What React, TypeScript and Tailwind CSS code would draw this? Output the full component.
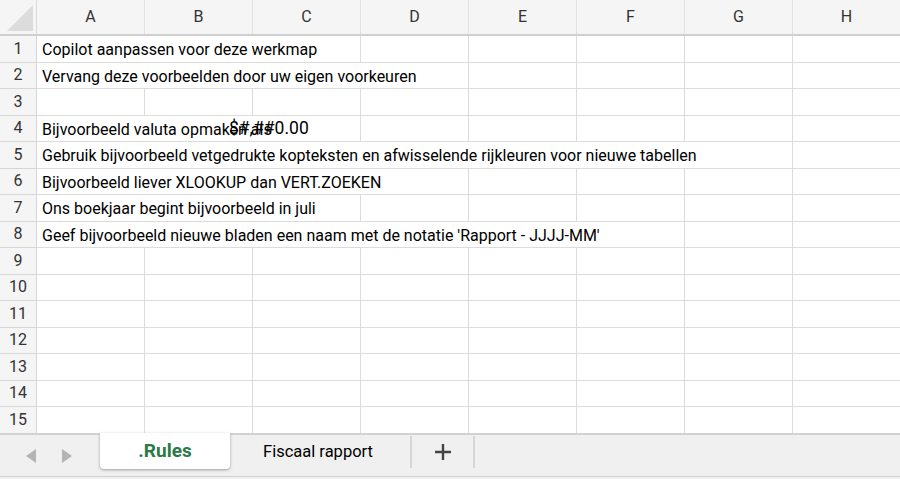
import React from "react";

const columns = ["A", "B", "C", "D", "E", "F", "G", "H"];

// text living in column A, keyed by row number
const cellText: Record<number, string> = {
  1: "Copilot aanpassen voor deze werkmap",
  2: "Vervang deze voorbeelden door uw eigen voorkeuren",
  4: "Bijvoorbeeld valuta opmaken als",
  5: "Gebruik bijvoorbeeld vetgedrukte kopteksten en afwisselende rijkleuren voor nieuwe tabellen",
  6: "Bijvoorbeeld liever XLOOKUP dan VERT.ZOEKEN",
  7: "Ons boekjaar begint bijvoorbeeld in juli",
  8: "Geef bijvoorbeeld nieuwe bladen een naam met de notatie 'Rapport - JJJJ-MM'",
};

const rows = Array.from({ length: 15 }, (_, i) => i + 1);

const gridCols = "grid grid-cols-[37px_repeat(8,108px)]";

const SheetTabs: React.FC = () => (
  <div className="h-[46px] shrink-0 bg-[#f0f0f0] border-t-2 border-[#d2d2d2] flex items-start relative">
    <div className="w-[100px] h-[42px] flex items-center pl-[24px] gap-[22px]">
      <svg width="14" height="16" viewBox="0 0 14 16">
        <path d="M12 1 L2 8 L12 15 Z" fill="#b4b4b4" />
      </svg>
      <svg width="14" height="16" viewBox="0 0 14 16">
        <path d="M2 1 L12 8 L2 15 Z" fill="#b4b4b4" />
      </svg>
    </div>
    <div className="w-[130px] h-[36px] bg-white rounded-b-[4px] shadow-[0_1px_3px_rgba(0,0,0,0.35)] flex items-center justify-center -mt-[2px] text-[19px] font-bold text-[#2a7a45]">
      .Rules
    </div>
    <div className="w-[182px] h-[32px] mt-[1px] border-r-2 border-[#d6d6d6] flex items-center justify-center pr-[4px] text-[16.5px] text-black">
      Fiscaal rapport
    </div>
    <div className="w-[63px] h-[32px] mt-[1px] border-r-2 border-[#d6d6d6] flex items-center justify-center">
      <svg width="18" height="18" viewBox="0 0 18 18">
        <path d="M9 1 V17 M1 9 H17" stroke="#444" strokeWidth="2.4" />
      </svg>
    </div>
    <div className="absolute left-0 right-0 bottom-[2px] h-px bg-[#d0d0d0]" />
  </div>
);

export default function App() {
  return (
    <div
      className="w-[900px] h-[479px] overflow-hidden bg-white flex flex-col"
      style={{ fontFamily: "Roboto, 'Liberation Sans', sans-serif" }}
    >
      {/* column headers */}
      <div className={`${gridCols} h-[36px] shrink-0 bg-[#f5f5f5] border-b-2 border-[#cfcfcf]`}>
        <div className="relative border-r border-[#dadada]">
          <svg className="absolute right-[3px] bottom-[3px]" width="26" height="26" viewBox="0 0 26 26">
            <path d="M26 0 V26 H0 Z" fill="#dcdcdc" />
          </svg>
        </div>
        {columns.map((c) => (
          <div
            key={c}
            className="border-r border-[#e0e0e0] flex items-center justify-center text-[16px] text-[#333]"
          >
            {c}
          </div>
        ))}
      </div>

      {/* rows */}
      <div className="flex-1 flex flex-col overflow-hidden">
        {rows.map((r) => (
          <div key={r} className={`${gridCols} h-[26.5px] shrink-0`}>
            <div className="bg-[#f5f5f5] border-r border-b border-[#d6d6d6] flex items-center justify-center text-[16px] text-[#333]">
              {r}
            </div>
            {columns.map((c, ci) => (
              <div key={c} className="relative border-r border-b border-[#dcdcdc]">
                {ci === 0 && cellText[r] && (
                  <span
                    className={`absolute left-0 top-0 bottom-0 z-10 bg-white whitespace-nowrap pl-[5px] pr-[2px] flex items-center text-[16px] leading-none text-black ${
                      r === 4 ? "pt-[4px]" : "pt-[3px]"
                    }`}
                  >
                    {cellText[r]}
                  </span>
                )}
                {ci === 1 && r === 4 && (
                  <span className="absolute left-[84px] top-0 bottom-0 z-20 whitespace-nowrap flex items-center pt-[1px] text-[17.5px] leading-none text-black">
                    $#,##0.00
                  </span>
                )}
              </div>
            ))}
          </div>
        ))}
      </div>

      <SheetTabs />
    </div>
  );
}
